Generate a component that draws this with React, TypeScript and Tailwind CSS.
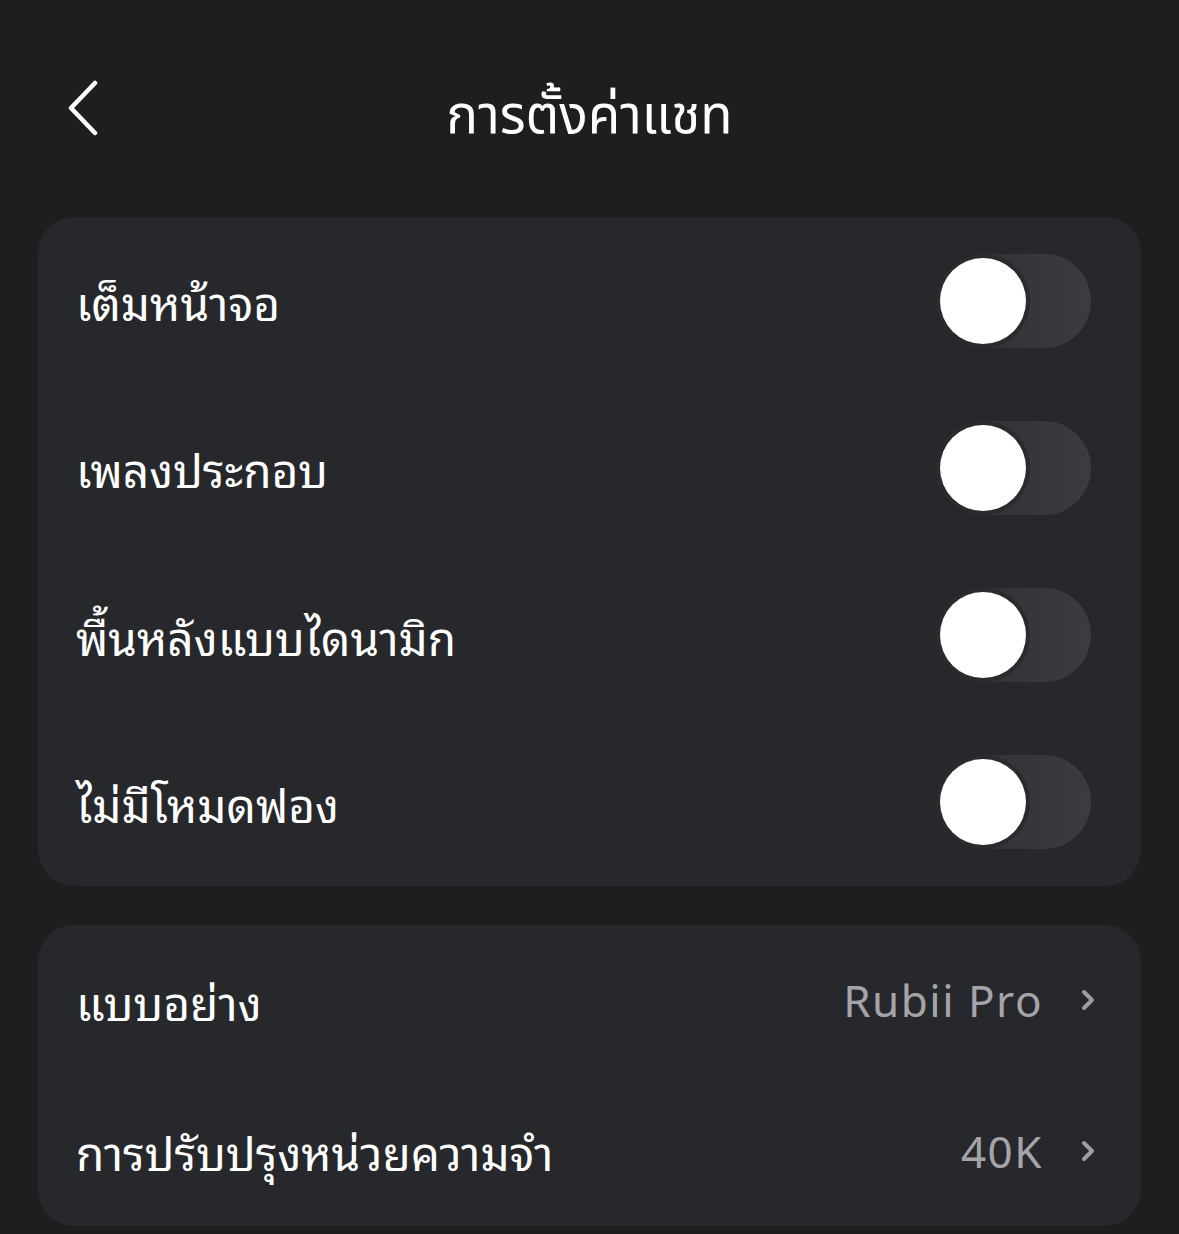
import React from "react";

const FONT = { fontFamily: '"Noto Sans", "Noto Sans Thai", "Liberation Sans", sans-serif' };
const LOOPED = { fontFamily: '"Noto Sans Thai Looped", "Noto Sans", sans-serif' };

function Toggle() {
  return (
    <div className="relative w-[152px] h-[94px] rounded-full bg-gradient-to-r from-[#2e2f33] to-[#3b3c40] shrink-0">
      <div className="absolute left-[1px] top-[4px] w-[86px] h-[86px] rounded-full bg-white shadow-[0_0_0_4px_#2a2b2e]" />
    </div>
  );
}

function ToggleRow({ label }: { label: string }) {
  return (
    <div className="h-[167.25px] flex items-center justify-between pl-[38px] pr-[50px]">
      <span className="text-white text-[46px]" style={LOOPED}>{label}</span>
      <Toggle />
    </div>
  );
}

function Chevron() {
  return (
    <svg width="14" height="22" viewBox="0 0 14 22" fill="none">
      <path d="M3 3 L11 11 L3 19" stroke="#9c9ca1" strokeWidth="4" strokeLinecap="round" strokeLinejoin="round" />
    </svg>
  );
}

function LinkRow({ label, value }: { label: string; value: string }) {
  return (
    <div className="h-[150.5px] flex items-center justify-between pl-[38px] pr-[46px]">
      <span className="text-white text-[46px]" style={LOOPED}>{label}</span>
      <div className="flex items-center gap-[38px]">
        <span className="text-[#a4a4a9] text-[44px] tracking-[1.5px]">{value}</span>
        <Chevron />
      </div>
    </div>
  );
}

export default function App() {
  return (
    <div className="w-[1179px] h-[1234px] bg-[#1d1e20] overflow-hidden" style={FONT}>
      <div className="relative h-[217px] flex items-start justify-center">
        <svg className="absolute left-[66px] top-[80px]" width="34" height="56" viewBox="0 0 34 56" fill="none">
          <path d="M29 3 L5 28 L29 53" stroke="white" strokeWidth="4.5" strokeLinecap="round" strokeLinejoin="round" />
        </svg>
        <h1 className="mt-[78px] text-white text-[53px] leading-[70px]">การตั้งค่าแชท</h1>
      </div>
      <div className="px-[38px] flex flex-col gap-[39px]">
        <div className="bg-[#27282c] rounded-[36px]">
          <ToggleRow label="เต็มหน้าจอ" />
          <ToggleRow label="เพลงประกอบ" />
          <ToggleRow label="พื้นหลังแบบไดนามิก" />
          <ToggleRow label="ไม่มีโหมดฟอง" />
        </div>
        <div className="bg-[#27282c] rounded-[36px]">
          <LinkRow label="แบบอย่าง" value="Rubii Pro" />
          <LinkRow label="การปรับปรุงหน่วยความจำ" value="40K" />
        </div>
      </div>
    </div>
  );
}
